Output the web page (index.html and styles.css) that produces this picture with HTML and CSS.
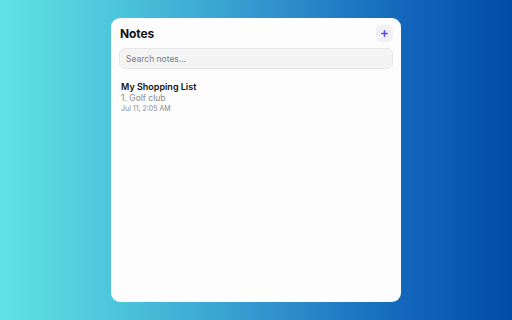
FILE: index.html
```html
<!DOCTYPE html>
<html lang="en">
<head>
    <meta charset="UTF-8">
    <title>Notes</title>
    <link rel="stylesheet" href="styles.css">
</head>
<body>
    <div class="panel">
        <header class="panel-header">
            <h1>Notes</h1>
            <button class="add-button" title="New note">
                <svg width="7" height="7" viewBox="0 0 7 7">
                    <path d="M3.5 0.8v5.4M0.8 3.5h5.4" stroke="#5a4ce0" stroke-width="1.5" stroke-linecap="round"/>
                </svg>
            </button>
        </header>

        <input class="search" type="text" placeholder="Search notes...">

        <ul class="note-list">
            <li class="note">
                <h3>My Shopping List</h3>
                <p class="preview">1. Golf club</p>
                <p class="date">Jul 11, 2:05 AM</p>
            </li>
        </ul>
    </div>
</body>
</html>
```

FILE: styles.css
```css
:root {
    --accent-color: #5a4ce0;
    --panel-background: #fcfdfc;
    --text-color: #111;
    --muted-color: #8a8a8a;
}

* {
    margin: 0;
    padding: 0;
    box-sizing: border-box;
}

html, body {
    height: 100%;
}

body {
    font-family: Inter, 'Noto Sans', sans-serif;
    background: linear-gradient(90deg, #62e2e4 0%, #4ac2da 25%, #2f90cc 55%, #1468bc 78%, #004ca6 100%);
    color: var(--text-color);
    display: flex;
    justify-content: center;
    padding-top: 18px;
}

.panel {
    width: 290px;
    height: 284px;
    background-color: var(--panel-background);
    border-radius: 9px;
    padding: 6px 8px;
}

.panel-header {
    display: flex;
    justify-content: space-between;
    align-items: center;
    height: 19px;
    padding-left: 1px;
    margin-bottom: 5px;
}

.panel-header h1 {
    font-size: 12px;
    font-weight: 700;
    line-height: 19px;
    letter-spacing: -0.1px;
}

.add-button {
    width: 17px;
    height: 17px;
    border: none;
    border-radius: 5px;
    background-color: #f1f1f4;
    display: flex;
    align-items: center;
    justify-content: center;
    cursor: pointer;
}

.search {
    display: block;
    width: 100%;
    height: 21px;
    border: 1px solid #e6e6e8;
    border-radius: 6px;
    background-color: #f4f4f5;
    padding: 0 6px;
    font-family: inherit;
    font-size: 8.5px;
    color: var(--text-color);
    outline: none;
}

.search::placeholder {
    color: #7c7c7c;
}

.note-list {
    list-style: none;
    margin-top: 11px;
}

.note {
    padding: 0 2px;
    cursor: pointer;
}

.note h3 {
    font-size: 9px;
    font-weight: 600;
    line-height: 13px;
}

.note .preview {
    font-size: 8.5px;
    color: var(--muted-color);
    line-height: 11px;
}

.note .date {
    font-size: 7px;
    color: var(--muted-color);
    line-height: 10px;
}
```
